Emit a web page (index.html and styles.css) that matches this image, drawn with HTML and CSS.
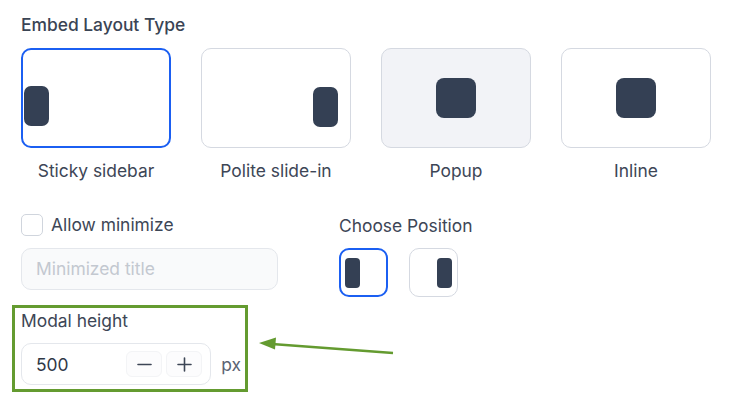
FILE: index.html
```html
<!DOCTYPE html>
<html>
<head>
<meta charset="utf-8">
<link rel="stylesheet" href="styles.css">
</head>
<body>
<div class="page">
  <div class="heading">Embed Layout Type</div>
  <div class="types">
    <div class="type">
      <div class="card selected"><span class="shape side-left"></span></div>
      <div class="type-label">Sticky sidebar</div>
    </div>
    <div class="type">
      <div class="card"><span class="shape side-right"></span></div>
      <div class="type-label">Polite slide-in</div>
    </div>
    <div class="type">
      <div class="card shaded"><span class="shape square"></span></div>
      <div class="type-label">Popup</div>
    </div>
    <div class="type">
      <div class="card"><span class="shape square"></span></div>
      <div class="type-label">Inline</div>
    </div>
  </div>

  <div class="options">
    <div class="col-left">
      <label class="check-row"><span class="checkbox"></span><span>Allow minimize</span></label>
      <div class="text-input">Minimized title</div>
    </div>
    <div class="col-right">
      <div class="label">Choose Position</div>
      <div class="positions">
        <div class="pos selected"><span class="pos-shape"></span></div>
        <div class="pos right"><span class="pos-shape"></span></div>
      </div>
    </div>
  </div>

  <div class="modal-box">
    <div class="label">Modal height</div>
    <div class="num-row">
      <div class="num-input">
        <span class="num-value">500</span>
        <span class="steps">
          <span class="step"><svg width="15" height="15" viewBox="0 0 15 15"><path d="M1 7.5h13" stroke="#3d4656" stroke-width="1.6" stroke-linecap="round"/></svg></span>
          <span class="step"><svg width="15" height="15" viewBox="0 0 15 15"><path d="M1 7.5h13M7.5 1v13" stroke="#3d4656" stroke-width="1.6" stroke-linecap="round"/></svg></span>
        </span>
      </div>
      <span class="unit">px</span>
    </div>
  </div>

  <svg class="arrow" width="150" height="30" viewBox="0 0 150 30">
    <path d="M143 23 L22 14" stroke="#649b30" stroke-width="2.6" fill="none"/>
    <path d="M9 13 L26 7.5 L25 19.5 Z" fill="#649b30"/>
  </svg>
</div>
</body>
</html>
```

FILE: styles.css
```css
* { box-sizing: border-box; }
html, body { margin: 0; padding: 0; background: #fff; }
body {
  font-family: Inter, "Noto Sans", sans-serif;
  color: #3d4656;
  font-size: 17.4px;
}
.page {
  position: relative;
  width: 733px;
  height: 406px;
  padding: 14px 0 0 21px;
}
.heading {
  font-size: 17.4px;
  font-weight: 500;
  line-height: 22px;
  color: #3a4454;
}
.types {
  display: flex;
  gap: 30px;
  margin-top: 12px;
}
.type { width: 150px; }
.card {
  position: relative;
  width: 150px;
  height: 100px;
  border: 1px solid #d5d9e1;
  border-radius: 10px;
  background: #fff;
}
.card.selected { border: 2px solid #1b5ff2; }
.card.shaded { background: #f2f3f7; }
.shape {
  position: absolute;
  background: #344054;
  border-radius: 7px;
}
.side-left { left: 1px; top: 36px; width: 25px; height: 40px; }
.side-right { right: 12px; top: 38px; width: 25px; height: 40px; }
.square { left: 54px; top: 29px; width: 40px; height: 40px; border-radius: 8px; }
.type-label {
  margin-top: 12px;
  text-align: center;
  line-height: 22px;
}

.options {
  display: flex;
  gap: 61px;
  margin-top: 32px;
}
.col-left { width: 257px; }
.check-row {
  display: flex;
  align-items: center;
  gap: 8px;
  height: 22px;
  line-height: 22px;
}
.checkbox {
  width: 22px;
  height: 22px;
  border: 1px solid #d0d5dd;
  border-radius: 5px;
  background: #fff;
}
.text-input {
  margin-top: 12px;
  height: 42px;
  border: 1px solid #e4e7ec;
  border-radius: 10px;
  background: #f9fafb;
  color: #c3c8d0;
  padding: 0 14px;
  line-height: 40px;
}
.label {
  line-height: 22px;
}
.col-right .label { margin-top: 1px; }
.positions {
  display: flex;
  gap: 21px;
  margin-top: 11px;
}
.pos {
  width: 49px;
  height: 49px;
  border: 1px solid #d5d9e1;
  border-radius: 10px;
  display: flex;
  align-items: center;
  padding: 0 5px;
}
.pos.selected { border: 2px solid #1b5ff2; padding: 0 4px; }
.pos.right { justify-content: flex-end; }
.pos-shape {
  width: 15px;
  height: 30px;
  border-radius: 4px;
  background: #344054;
}

.modal-box {
  width: 236px;
  margin-top: 8px;
  margin-left: -9px;
  border: 3px solid #649b30;
  padding: 2px 4px 4px 6px;
}
.num-row {
  display: flex;
  align-items: center;
  gap: 10px;
  margin-top: 11px;
}
.num-input {
  width: 191px;
  height: 42px;
  border: 1px solid #e4e7ec;
  border-radius: 10px;
  display: flex;
  align-items: center;
  justify-content: space-between;
  padding: 0 8px 0 14px;
}
.num-value { color: #2f3846; }
.steps { display: flex; gap: 4px; }
.step {
  width: 36px;
  height: 26px;
  border: 1px solid #f3f4f6;
  border-radius: 6px;
  background: #fcfcfd;
  display: flex;
  align-items: center;
  justify-content: center;
}
.step svg { display: block; }
.unit { color: #5a6373; }

.arrow {
  position: absolute;
  left: 250px;
  top: 330px;
}
```
